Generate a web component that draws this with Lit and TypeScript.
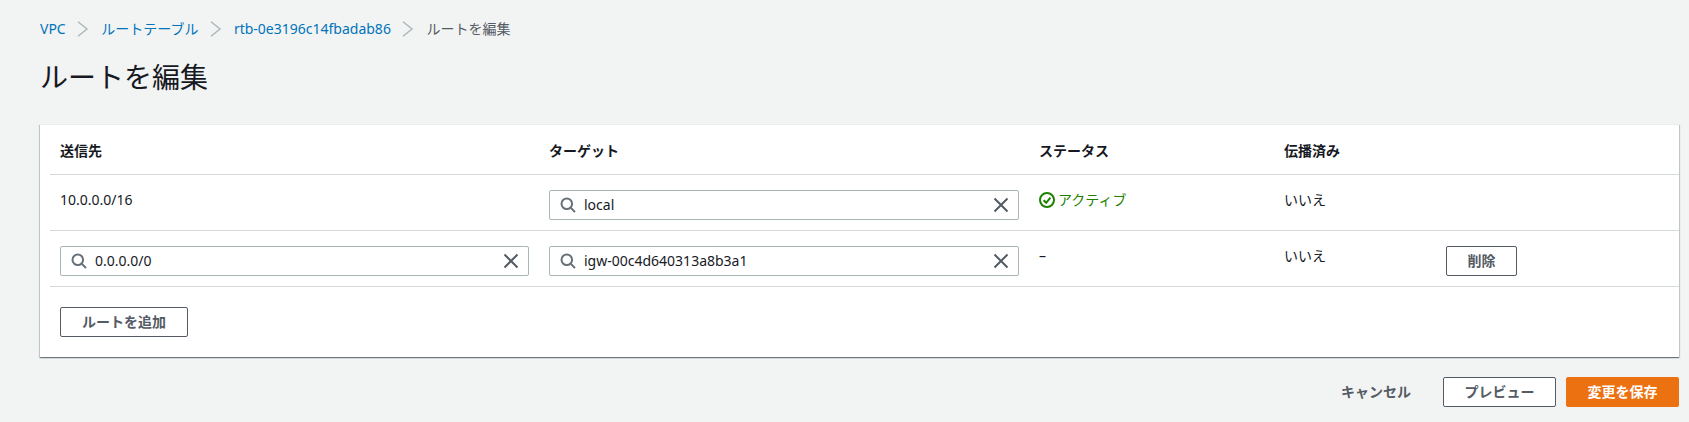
import { LitElement, html, css, svg } from "lit";
import { customElement } from "lit/decorators.js";

const chevron = html`<svg class="chev" viewBox="0 0 16 16" width="16" height="16"><path d="M3 .8 12 8l-9 7.2" fill="none" stroke="#aab7b8" stroke-width="1.4"/></svg>`;
const searchIcon = html`<svg class="search" viewBox="0 0 16 16" width="16" height="16"><circle cx="6.8" cy="6.8" r="5.3" fill="none" stroke="#687078" stroke-width="2"/><path d="M10.6 10.6 15 15" stroke="#687078" stroke-width="2" fill="none"/></svg>`;
const clearIcon = html`<svg class="clear" viewBox="0 0 16 16" width="16" height="16"><path d="M1.5 1.5l13 13M14.5 1.5l-13 13" stroke="#545b64" stroke-width="2" fill="none"/></svg>`;
const okIcon = svg`<circle cx="8" cy="8" r="7" fill="none" stroke="#1d8102" stroke-width="2"/><path d="M4.6 8.2 7.2 10.8 11.4 5.6" fill="none" stroke="#1d8102" stroke-width="2"/>`;

@customElement("app-root")
export class AppRoot extends LitElement {
  static styles = css`
    :host {
      display: block;
      width: 1689px;
      height: 422px;
      background: #f2f3f3;
      overflow: hidden;
      box-sizing: border-box;
      padding: 19px 10px 0 40px;
      font-family: "Noto Sans", "Noto Sans CJK JP", sans-serif;
      font-size: 14px;
      line-height: 20px;
      color: #16191f;
    }
    .crumbs { display: flex; align-items: center; height: 20px; color: #545b64; }
    .crumbs a { color: #0073bb; text-decoration: none; }
    .chev { margin: 0 10px 0 9.5px; flex: none; }
    h1 { margin: 18px 0 0; font-size: 28px; line-height: 40px; font-weight: 400; }
    .card {
      margin-top: 27px;
      background: #fff;
      height: 233px;
      box-sizing: border-box;
      padding-left: 10px;
      border-top: 1px solid #eaeded;
      box-shadow: 0 1px 1px 0 rgba(0, 28, 36, 0.4), 1px 1px 1px 0 rgba(0, 28, 36, 0.15), -1px 1px 1px 0 rgba(0, 28, 36, 0.15);
    }
    .row {
      display: grid;
      grid-template-columns: 489px 490px 245px 161px 1fr;
      border-bottom: 1px solid #d5dbdb;
      box-sizing: border-box;
      height: 56px;
    }
    .row.head { height: 50px; font-weight: 700; align-items: center; padding-top: 2px; }
    .cell { padding: 15px 10px 0; }
    .head .cell { padding: 0 10px; }
    .status { display: flex; align-items: flex-start; color: #1d8102; gap: 3px; }
    .status svg { margin-top: 2px; flex: none; }
    .input {
      display: flex;
      align-items: center;
      height: 30px;
      box-sizing: border-box;
      border: 1px solid #aab7b8;
      border-radius: 2px;
      background: #fff;
      padding: 0 9px 0 10px;
    }
    .search { flex: none; margin-right: 8px; }
    .input span { flex: 1; }
    .clear { flex: none; }
    button {
      font: inherit;
      font-weight: 700;
      color: #545b64;
      background: #fff;
      border: 1px solid #545b64;
      border-radius: 2px;
      padding: 0;
      height: 30px;
      box-sizing: border-box;
      display: block;
    }
    .del { width: 71px; margin-left: 1px; }
    .add { width: 128px; margin: 20px 0 0 10px; }
    .footer { display: flex; justify-content: flex-end; align-items: center; margin-top: 20px; }
    .cancel { border: 0; background: none; width: 72px; margin-right: 31px; }
    .preview { width: 113px; margin-right: 10px; }
    .save { width: 113px; background: #ec7211; border-color: #ec7211; color: #fff; }
  `;

  private field(value: string) {
    return html`<div class="input">${searchIcon}<span>${value}</span>${clearIcon}</div>`;
  }

  render() {
    return html`
      <nav class="crumbs">
        <a>VPC</a>${chevron}<a>ルートテーブル</a>${chevron}<a>rtb-0e3196c14fbadab86</a>${chevron}<span>ルートを編集</span>
      </nav>
      <h1>ルートを編集</h1>
      <section class="card">
        <div class="row head">
          <div class="cell">送信先</div><div class="cell">ターゲット</div><div class="cell">ステータス</div><div class="cell">伝播済み</div><div class="cell"></div>
        </div>
        <div class="row">
          <div class="cell">10.0.0.0/16</div>
          <div class="cell">${this.field("local")}</div>
          <div class="cell status"><svg viewBox="0 0 16 16" width="16" height="16">${okIcon}</svg>アクティブ</div>
          <div class="cell">いいえ</div>
          <div class="cell"></div>
        </div>
        <div class="row">
          <div class="cell">${this.field("0.0.0.0/0")}</div>
          <div class="cell">${this.field("igw-00c4d640313a8b3a1")}</div>
          <div class="cell">–</div>
          <div class="cell">いいえ</div>
          <div class="cell"><button class="del">削除</button></div>
        </div>
        <button class="add">ルートを追加</button>
      </section>
      <div class="footer">
        <button class="cancel">キャンセル</button>
        <button class="preview">プレビュー</button>
        <button class="save">変更を保存</button>
      </div>
    `;
  }
}
